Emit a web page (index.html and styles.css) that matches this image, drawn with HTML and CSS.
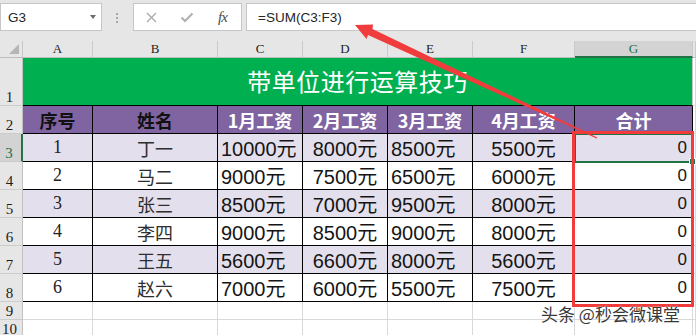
FILE: index.html
```html
<!DOCTYPE html>
<html lang="zh">
<head>
<meta charset="utf-8">
<title>带单位进行运算技巧</title>
<link rel="stylesheet" href="styles.css">
</head>
<body>
<div class="app">
  <div class="formula-bar">
    <div class="namebox"><span class="ref">G3</span><span class="caret"></span></div>
    <div class="grip"><i></i><i></i><i></i></div>
    <div class="fxbox">
      <svg class="ico" width="11" height="11" viewBox="0 0 11 11"><path d="M1 1L10 10M10 1L1 10" stroke="#a9a9a9" stroke-width="1.3" fill="none"/></svg>
      <svg class="ico" width="14" height="11" viewBox="0 0 14 11"><path d="M1.5 5.5L5 9L12.5 1.5" stroke="#b0b0b0" stroke-width="2" fill="none"/></svg>
      <span class="fx">fx</span>
    </div>
    <div class="formula">=SUM(C3:F3)</div>
  </div>

  <div class="sheet">
    <div class="row">
      <div class="corner"><svg width="10" height="10" viewBox="0 0 10 10"><polygon points="10,0 10,10 0,10" fill="#b5b5b5"/></svg></div>
      <div class="ch">A</div><div class="ch">B</div><div class="ch">C</div><div class="ch">D</div><div class="ch">E</div><div class="ch">F</div><div class="ch sel">G</div><div class="ch"></div>
    </div>
    <div class="row">
      <div class="rh">1</div><div class="title">带单位进行运算技巧</div><div class="gc"></div>
    </div>
    <div class="row">
      <div class="rh">2</div>
      <div class="hd dark">序号</div><div class="hd dark">姓名</div><div class="hd">1月工资</div><div class="hd">2月工资</div><div class="hd">3月工资</div><div class="hd">4月工资</div><div class="hd">合计</div><div class="gc"></div>
    </div>
    <div class="row alt">
      <div class="rh sel">3</div>
      <div class="td num">1</div><div class="td name">丁一</div><div class="td l">10000元</div><div class="td m">8000元</div><div class="td l">8500元</div><div class="td m">5500元</div><div class="td r">0</div><div class="gc"></div>
    </div>
    <div class="row">
      <div class="rh">4</div>
      <div class="td num">2</div><div class="td name">马二</div><div class="td l">9000元</div><div class="td m">7500元</div><div class="td l">6500元</div><div class="td m">6000元</div><div class="td r">0</div><div class="gc"></div>
    </div>
    <div class="row alt">
      <div class="rh">5</div>
      <div class="td num">3</div><div class="td name">张三</div><div class="td l">8500元</div><div class="td m">7000元</div><div class="td l">9500元</div><div class="td m">8000元</div><div class="td r">0</div><div class="gc"></div>
    </div>
    <div class="row">
      <div class="rh">6</div>
      <div class="td num">4</div><div class="td name">李四</div><div class="td l">9000元</div><div class="td m">8500元</div><div class="td l">9000元</div><div class="td m">8000元</div><div class="td r">0</div><div class="gc"></div>
    </div>
    <div class="row alt">
      <div class="rh">7</div>
      <div class="td num">5</div><div class="td name">王五</div><div class="td l">5600元</div><div class="td m">6600元</div><div class="td l">8000元</div><div class="td m">5600元</div><div class="td r">0</div><div class="gc"></div>
    </div>
    <div class="row">
      <div class="rh">8</div>
      <div class="td num">6</div><div class="td name">赵六</div><div class="td l">7000元</div><div class="td m">6000元</div><div class="td l">5500元</div><div class="td m">7500元</div><div class="td r">0</div><div class="gc"></div>
    </div>
    <div class="row">
      <div class="rh">9</div>
      <div class="gc"></div><div class="gc"></div><div class="gc"></div><div class="gc"></div><div class="gc"></div><div class="gc"></div><div class="gc"></div><div class="gc"></div>
    </div>
    <div class="row">
      <div class="rh">10</div>
      <div class="gc"></div><div class="gc"></div><div class="gc"></div><div class="gc"></div><div class="gc"></div><div class="gc"></div><div class="gc"></div><div class="gc"></div>
    </div>
  </div>

  <div class="selection"><span class="handle"></span></div>
  <div class="highlight"></div>
  <svg class="arrow" width="696" height="335" viewBox="0 0 696 335">
    <polygon points="355,25 373,24.5 372.5,29 597.3,137.4 596.7,138.6 368,35 366.5,39" fill="#f03c3c"/>
  </svg>
  <div class="watermark">头条 @秒会微课堂</div>
</div>
</body>
</html>
```

FILE: styles.css
```css
html, body {
  margin: 0;
  padding: 0;
}
body {
  width: 696px;
  height: 335px;
  overflow: hidden;
  background: #e6e6e6;
  font-family: "Noto Sans CJK SC", "Liberation Sans", sans-serif;
}
.app {
  position: relative;
  width: 696px;
  height: 335px;
}

/* formula bar */
.formula-bar {
  display: flex;
  align-items: flex-start;
  height: 41px;
  padding-top: 3px;
  box-sizing: border-box;
}
.namebox {
  box-sizing: border-box;
  width: 102px;
  height: 28px;
  background: #fff;
  border: 1px solid #c6c6c6;
  display: flex;
  align-items: center;
  justify-content: space-between;
  padding: 0 5px 0 7px;
}
.ref {
  font: 13.5px "Liberation Sans", sans-serif;
  color: #262626;
}
.caret {
  width: 0;
  height: 0;
  border-left: 3.5px solid transparent;
  border-right: 3.5px solid transparent;
  border-top: 4px solid #6b6b6b;
}
.grip {
  width: 2px;
  margin: 10px 0 0 14px;
  display: flex;
  flex-direction: column;
  gap: 2px;
}
.grip i {
  display: block;
  width: 2px;
  height: 2px;
  background: #a8a8a8;
}
.fxbox {
  box-sizing: border-box;
  margin-left: 15px;
  width: 109px;
  height: 28px;
  background: #fff;
  border: 1px solid #c6c6c6;
  display: flex;
  align-items: center;
  gap: 23px;
  padding-left: 12px;
}
.fx {
  font: italic 15px "Liberation Serif", serif;
  color: #4a4a4a;
  letter-spacing: -1px;
  margin-left: 1px;
}
.formula {
  box-sizing: border-box;
  flex: 1;
  margin-left: 4px;
  height: 28px;
  background: #fff;
  border: 1px solid #c6c6c6;
  border-right: none;
  padding-left: 11px;
  display: flex;
  align-items: center;
  font: 13.5px "Liberation Sans", sans-serif;
  color: #262626;
}

/* sheet grid */
.sheet {
  display: grid;
  grid-template-columns: 23px 70px 125px 85px 85px 85px 102px 118px 1fr;
  grid-template-rows: 17px 48px repeat(7, 28px) 18px 18px;
  background: #fff;
}
.row {
  display: contents;
}
.corner, .ch, .rh, .title, .hd, .td, .gc {
  box-sizing: border-box;
  display: flex;
  align-items: center;
  overflow: hidden;
  white-space: nowrap;
}
.corner {
  background: #e6e6e6;
  border-right: 1px solid #c8c8c8;
  border-bottom: 1px solid #bdbdbd;
  justify-content: flex-end;
  align-items: flex-end;
  padding: 0 3px 3px 0;
}
.ch {
  background: #e6e6e6;
  border-right: 1px solid #cacaca;
  border-bottom: 1px solid #bdbdbd;
  justify-content: center;
  font: 13px "Liberation Serif", serif;
  color: #1e1e1e;
}
.ch.sel {
  background: #d3d3d3;
  color: #217346;
  border-bottom: 2px solid #217346;
}
.rh {
  background: #e6e6e6;
  border-right: 1px solid #c2c2c2;
  border-bottom: 1px solid #cbcbcb;
  justify-content: center;
  align-items: flex-end;
  padding: 0 3px 0 0;
  font: 15px/1.1 "Liberation Serif", serif;
  color: #1e1e1e;
}
.rh.sel {
  background: #d3d3d3;
  color: #217346;
  border-right: 2px solid #217346;
}
.title {
  grid-column: 2 / span 7;
  background: #00b050;
  border-bottom: 1px solid #000;
  border-right: 1px solid #c6c6c6;
  justify-content: center;
  color: #fff;
  font-size: 24px;
  letter-spacing: 0.5px;
  padding-bottom: 2px;
}
.hd {
  background: #8064a2;
  border-right: 1px solid #000;
  border-bottom: 1px solid #000;
  justify-content: center;
  color: #fff;
  font-size: 18px;
  font-weight: bold;
}
.hd.dark {
  color: #111;
}
.td {
  border-right: 1px solid #000;
  border-bottom: 1px solid #000;
  font: 20px "Liberation Sans Narrow", "Liberation Sans", "Noto Sans CJK SC", sans-serif;
  color: #151515;
}
.alt .td {
  background: #e4dfec;
}
.td.num {
  justify-content: center;
  font: 18px "Liberation Serif", serif;
  color: #222;
}
.td.name {
  justify-content: center;
  font: 18px "Noto Sans CJK SC", sans-serif;
  color: #2e2e2e;
}
.td.l {
  justify-content: flex-start;
  padding-left: 3px;
}
.td.m {
  justify-content: center;
}
.td.r {
  justify-content: flex-end;
  padding-right: 5px;
  font-size: 17px;
}
.gc {
  background: #fff;
  border-right: 1px solid #d9d9d9;
  border-bottom: 1px solid #d9d9d9;
}

/* overlays */
.selection {
  position: absolute;
  left: 574px;
  top: 133px;
  width: 120px;
  height: 30px;
  box-sizing: border-box;
  border: 2px solid #217346;
}
.handle {
  position: absolute;
  right: -4px;
  bottom: -4px;
  width: 5px;
  height: 5px;
  background: #217346;
  border: 1px solid #fff;
}
.highlight {
  position: absolute;
  left: 572px;
  top: 131px;
  width: 122px;
  height: 176px;
  box-sizing: border-box;
  border: 3px solid #f03c3c;
}
.arrow {
  position: absolute;
  left: 0;
  top: 0;
  pointer-events: none;
}
.watermark {
  position: absolute;
  left: 541px;
  top: 302px;
  font-size: 17px;
  line-height: 24px;
  color: #383838;
  text-shadow: 0 0 2px #fff, 0 0 1px #fff;
  white-space: nowrap;
}
```
